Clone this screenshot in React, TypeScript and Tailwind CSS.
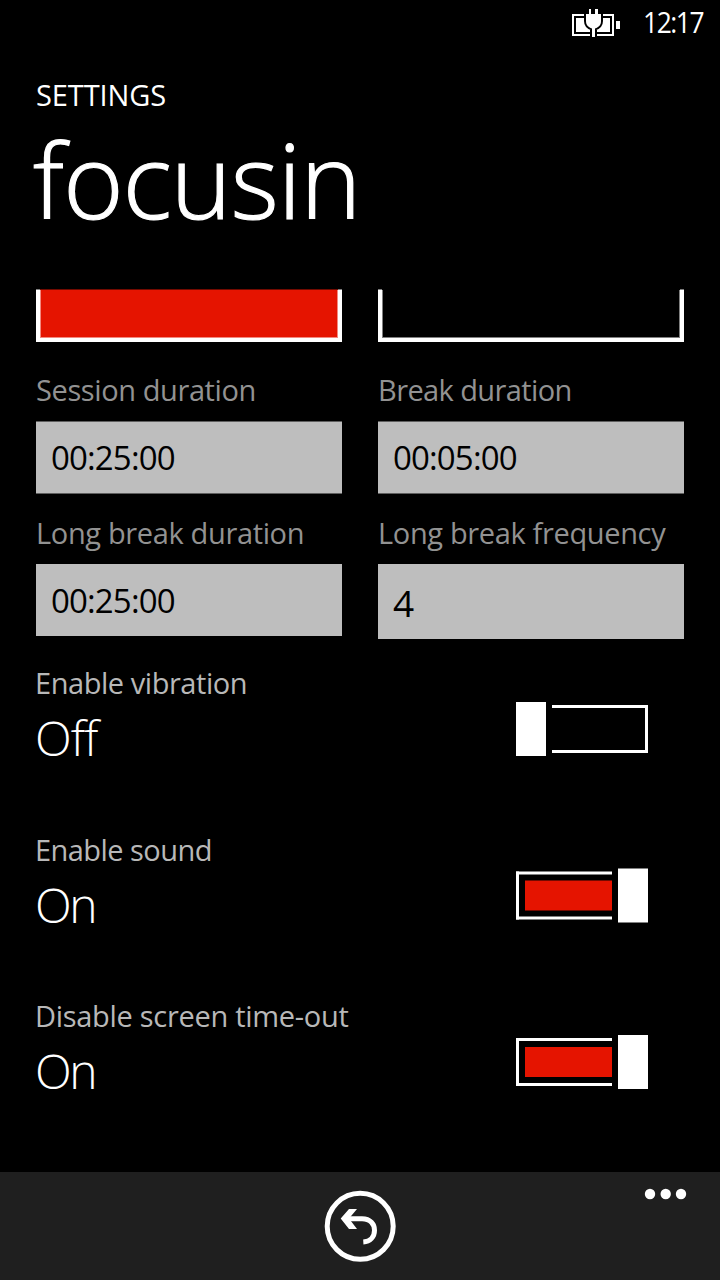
type ToggleProps = { on: boolean };

function Toggle({ on }: ToggleProps) {
  if (!on) {
    return (
      <div className="flex h-[54px] w-[132px] items-center justify-between">
        <div className="h-[54px] w-[30px] bg-white" />
        <div className="h-12 w-24 border-y-[3px] border-r-[3px] border-white" />
      </div>
    );
  }
  return (
    <div className="flex h-[54px] w-[132px] items-center justify-between">
      <div className="h-12 w-24 border-y-[3px] border-l-[3px] border-white py-1.5 pl-1.5">
        <div className="h-full bg-[#e51400]" />
      </div>
      <div className="h-[54px] w-[30px] bg-white" />
    </div>
  );
}

type SettingProps = { label: string; labelClass: string; on: boolean; valueClass: string; className: string };

function Setting({ label, labelClass, on, valueClass, className }: SettingProps) {
  return (
    <div className={`flex h-[166px] justify-between pr-9 ${className}`}>
      <div className="whitespace-nowrap">
        <div className={`h-10 text-[29px] leading-10 text-[#b8b8b8] ${labelClass}`}>{label}</div>
        <div className={`h-[68px] text-[48px] leading-[69px] font-light text-white [font-variant-ligatures:none] ${valueClass}`}>
          {on ? "On" : "Off"}
        </div>
      </div>
      <div className="pt-[39px]">
        <Toggle on={on} />
      </div>
    </div>
  );
}

type ColorBoxProps = { fill: string; edge: string; cap: string };

function ColorBox({ fill, edge, cap }: ColorBoxProps) {
  return (
    <div className="w-[306px]">
      <div className={`h-px border-x-4 border-[#808080] ${cap}`} />
      <div className="h-[52px] border-x-4 border-b-4 border-white">
        <div className={`h-full border-x border-b ${edge} ${fill}`} />
      </div>
    </div>
  );
}

const label = "h-10 text-[29px] leading-10 text-[#929292] whitespace-nowrap";
const field = "w-[306px] bg-[#bebebe] pl-[15px] text-black whitespace-nowrap";

export default function App() {
  return (
    <div className="flex h-[1280px] w-[720px] flex-col overflow-hidden bg-black font-['Open_Sans','Noto_Sans',sans-serif] text-white">
      <div className="flex h-[79px] justify-end pr-4">
        <svg className="mt-2 mr-[22px] h-[30px] w-[50px]" viewBox="571 8 50 30">
          <path d="M573 15h40v20h-40z" fill="none" stroke="#fff" strokeWidth="2" />
          <path d="M576 18h34v14h-34z" fill="#fff" />
          <path d="M616 21h4v8h-4z" fill="#fff" />
          <path
            d="M586 14h3V9h2v5h4V9h3v5h3v7c0 4-2 6-6 7.500V37h-3v-8.500c-4-1.500-6-3.500-6-7.500z"
            fill="#fff"
            stroke="#000"
            strokeWidth="4"
            paintOrder="stroke"
          />
        </svg>
        <div className="w-[61px] origin-left scale-x-[0.91] text-[29px] leading-[44px] tracking-[-1.6px] whitespace-nowrap">12:17</div>
      </div>
      <div className="h-[41px] pl-9 text-[29px] leading-8 tracking-[-0.1px]">SETTINGS</div>
      <div className="h-[169px] pl-[33px] text-[103px] leading-[119px] font-light tracking-[-0.8px] [-webkit-text-stroke:1.2px_white]">focusin</div>

      <div className="flex gap-9 px-9">
        <ColorBox fill="bg-[#e51400]" edge="border-[#f38a80]" cap="bg-[#730a00]" />
        <ColorBox fill="bg-black" edge="border-[#808080]" cap="bg-black" />
      </div>

      <div className="mt-7 flex gap-9 px-9">
        <div className="w-[306px]">
          <div className={`${label} tracking-[-0.4px]`}>Session duration</div>
          <div className={`${field} mt-[11px] h-[73px] border-y border-[#5f5f5f] text-[33px] leading-[71px] tracking-[-0.85px]`}>00:25:00</div>
          <div className={`${label} mt-[19px] tracking-[-0.35px]`}>Long break duration</div>
          <div className={`${field} mt-[11px] h-[72px] text-[33px] leading-[74px] tracking-[-0.85px]`}>00:25:00</div>
        </div>
        <div className="w-[306px]">
          <div className={`${label} tracking-[-0.6px]`}>Break duration</div>
          <div className={`${field} mt-[11px] h-[73px] border-y border-[#5f5f5f] text-[33px] leading-[71px] tracking-[-0.85px]`}>00:05:00</div>
          <div className={`${label} mt-[19px] tracking-[-0.35px]`}>Long break frequency</div>
          <div className={`${field} mt-[11px] h-[75px] text-[37px] leading-[77px]`}>4</div>
        </div>
      </div>

      <div className="mt-6 h-[509px] pl-[35px] pr-9">
        <Setting label="Enable vibration" labelClass="tracking-[-0.45px]" on={false} valueClass="tracking-[-1px]" className="" />
        <Setting label="Enable sound" labelClass="tracking-[-0.55px]" on valueClass="tracking-[-2.5px]" className="translate-y-[0.5px]" />
        <Setting label="Disable screen time-out" labelClass="tracking-[-0.3px]" on valueClass="tracking-[-2.5px]" className="translate-y-px" />
      </div>

      <div className="grid h-[108px] grid-cols-3 bg-[#1f1f1f]">
        <div />
        <div className="flex justify-center pt-[18px]">
          <svg className="h-[72px] w-[72px]" viewBox="324 1190 72 72" fill="none" stroke="#fff">
            <circle cx="360.2" cy="1226.3" r="33" strokeWidth="5" />
            <path d="M344 1218.700h18c8.500 0 12.500 5.500 12.500 11.500 0 7-4.500 11.300-11.200 11.700" strokeWidth="5" />
            <path d="M349 1209h8l-8 9.600 8 10.400h-8L340.700 1218.600z" fill="#fff" stroke="none" />
          </svg>
        </div>
        <div className="flex justify-end pt-4 pr-[33px]">
          <svg className="h-3 w-[43px]" viewBox="644 1188 43 12" fill="#fff">
            <circle cx="650" cy="1194" r="5.200" />
            <circle cx="665.700" cy="1194" r="5.200" />
            <circle cx="681" cy="1194" r="5.200" />
          </svg>
        </div>
      </div>
    </div>
  );
}
